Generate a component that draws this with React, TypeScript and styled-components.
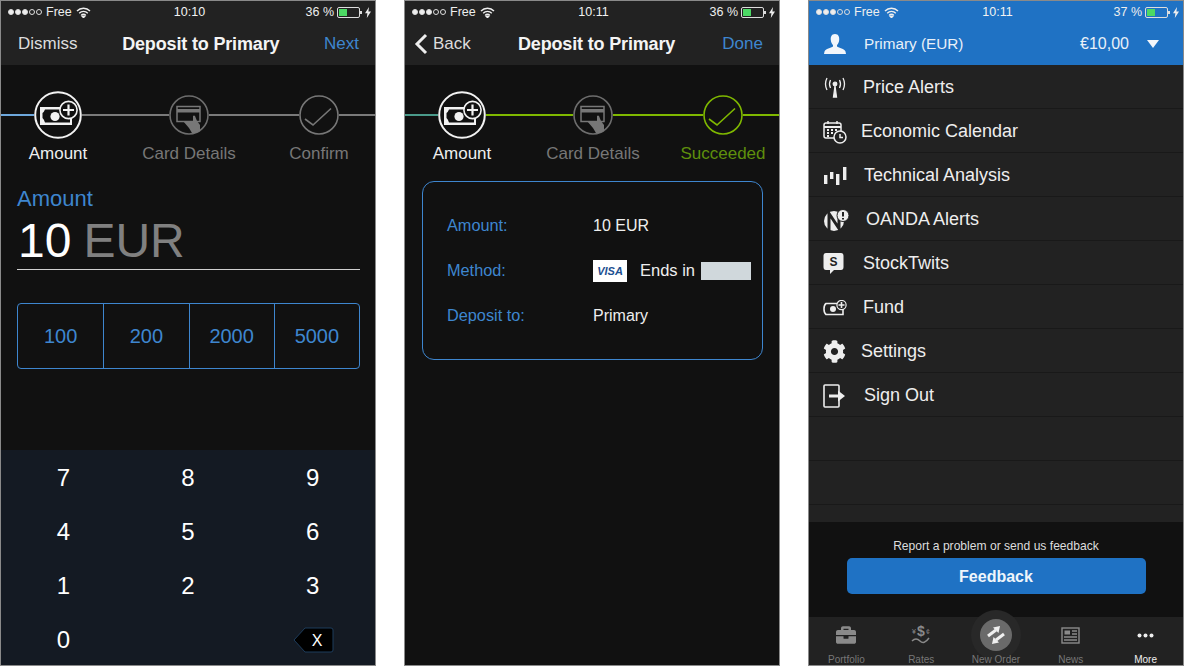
import React from 'react';
import styled, { createGlobalStyle } from 'styled-components';
import { FaCog, FaBriefcase } from 'react-icons/fa';

const GlobalStyle = createGlobalStyle`
  html, body {
    margin: 0;
    background: #fff;
  }
  * {
    box-sizing: border-box;
  }
`;

const BLUE = '#3e86cf';
const HEADER_BLUE = '#1f72c4';
const GREEN = '#7fb800';

const Page = styled.div`
  display: flex;
  gap: 28px;
  width: 1184px;
  height: 667px;
  overflow: hidden;
  font-family: 'Liberation Sans', Arial, sans-serif;
`;

const Phone = styled.div`
  display: flex;
  flex-direction: column;
  width: 376px;
  height: 666px;
  border: 1px solid #8a8a8a;
  background: #111;
  overflow: hidden;
`;

const Top = styled.div<{ $bg: string }>`
  height: 64px;
  flex: none;
  background: ${(p) => p.$bg};
`;

const StatusBar = styled.div`
  display: grid;
  grid-template-columns: 1fr auto 1fr;
  align-items: center;
  height: 22px;
  padding: 0 4px 0 7px;
  color: #eee;
  font-size: 12.5px;
`;

const StatusLeft = styled.div`
  display: flex;
  align-items: center;
  gap: 4px;
`;

const StatusRight = styled.div`
  display: flex;
  align-items: center;
  justify-content: flex-end;
  gap: 3px;
`;

const Dots = styled.div`
  display: flex;
  gap: 1px;
`;

const Dot = styled.span<{ $on: boolean }>`
  width: 6px;
  height: 6px;
  border-radius: 50%;
  border: 1px solid #ddd;
  background: ${(p) => (p.$on ? '#eee' : 'transparent')};
`;

const Clock = styled.div`
  font-weight: 500;
  color: #f2f2f2;
`;

const Battery = styled.div`
  position: relative;
  width: 23px;
  height: 11px;
  border: 1px solid #ddd;
  border-radius: 2px;
  padding: 1px;
  margin-right: 2px;
  &::after {
    content: '';
    position: absolute;
    right: -3px;
    top: 3px;
    width: 2px;
    height: 3px;
    background: #ddd;
  }
`;

const BatteryFill = styled.div<{ $level: number }>`
  width: ${(p) => p.$level}%;
  height: 100%;
  background: #4cd964;
`;

const NavBar = styled.div<{ $left: number }>`
  display: flex;
  align-items: center;
  justify-content: space-between;
  height: 42px;
  padding: 0 16px 0 ${(p) => p.$left}px;
  font-size: 17px;
`;

const NavLeft = styled.div`
  display: flex;
  align-items: center;
  gap: 5px;
  color: #ddd;
`;

const NavTitle = styled.div`
  color: #f4f4f4;
  font-size: 18px;
  font-weight: 700;
  letter-spacing: -0.16px;
`;

const NavRight = styled.div`
  color: ${BLUE};
`;

const Stepper = styled.div`
  display: flex;
  padding-top: 26px;
  height: 116px;
  flex: none;
`;

const Step = styled.div<{ $width: number }>`
  display: flex;
  flex-direction: column;
  align-items: center;
  width: ${(p) => p.$width}px;
`;

const StepHead = styled.div`
  display: flex;
  align-items: center;
  width: 100%;
  height: 48px;
`;

const Seg = styled.div<{ $color: string }>`
  flex: 1;
  height: 2px;
  background: ${(p) => p.$color};
`;

const StepIcon = styled.svg`
  flex: none;
  display: block;
`;

const StepLabel = styled.div<{ $color: string }>`
  margin-top: 4px;
  font-size: 17px;
  line-height: 22px;
  white-space: nowrap;
  color: ${(p) => p.$color};
`;

const AmountForm = styled.div`
  padding: 0 15px 0 16px;
  flex: 1;
`;

const AmountLabel = styled.div`
  margin-top: 5px;
  color: ${BLUE};
  font-size: 22px;
  line-height: 26px;
`;

const AmountField = styled.div`
  display: flex;
  align-items: baseline;
  gap: 12px;
  height: 57px;
  margin-top: 1px;
  padding-left: 1px;
  border-bottom: 1px solid #d0d0d0;
  font-size: 48px;
  line-height: 55px;
  color: #fff;
`;

const Currency = styled.span`
  color: #808080;
`;

const Presets = styled.div`
  display: grid;
  grid-template-columns: repeat(4, 1fr);
  height: 66px;
  margin-top: 33px;
  border: 1px solid ${BLUE};
  border-radius: 4px;
`;

const Preset = styled.div`
  display: flex;
  align-items: center;
  justify-content: center;
  color: ${BLUE};
  font-size: 20px;
  & + & {
    border-left: 1px solid ${BLUE};
  }
`;

const Keypad = styled.div`
  display: grid;
  grid-template-columns: repeat(3, 1fr);
  grid-auto-rows: 54px;
  flex: none;
  height: 215px;
  padding-top: 1px;
  background: #141a23;
`;

const Key = styled.div`
  display: flex;
  align-items: center;
  justify-content: center;
  color: #fff;
  font-size: 24px;
`;

const BackKey = styled.svg`
  display: block;
  margin-left: 2px;
`;

const Details = styled.div`
  display: flex;
  flex-direction: column;
  justify-content: center;
  gap: 19px;
  height: 179px;
  margin: 0 16px 0 17px;
  padding-left: 24px;
  border: 1px solid ${BLUE};
  border-radius: 12px;
  font-size: 16px;
`;

const DetailRow = styled.div`
  display: flex;
  align-items: center;
  height: 26px;
`;

const DetailKey = styled.div`
  width: 146px;
  color: ${BLUE};
  font-size: 16.3px;
`;

const DetailValue = styled.div`
  display: flex;
  align-items: center;
  color: #eee;
`;

const VisaBadge = styled.div`
  display: flex;
  align-items: center;
  justify-content: center;
  width: 34px;
  height: 22px;
  margin-right: 13px;
  background: #fff;
  color: #1d4f91;
  font-size: 11px;
  font-weight: 700;
  font-style: italic;
`;

const EndsIn = styled.span`
  font-size: 16.5px;
  margin-right: 6px;
`;

const Redacted = styled.div`
  width: 50px;
  height: 18px;
  background: #d0d8dc;
`;

const AccountBar = styled.div`
  display: flex;
  align-items: center;
  height: 42px;
  padding: 0 24px 1px 15px;
  color: #e8f0f8;
  font-size: 16px;
`;

const AccountName = styled.div`
  flex: 1;
  margin-left: 18px;
  font-size: 15.3px;
`;

const AccountValue = styled.div`
  margin-right: 18px;
`;

const Menu = styled.div`
  flex: 1;
  min-height: 0;
  overflow: hidden;
  background: #222;
`;

const MenuRow = styled.div`
  display: flex;
  align-items: center;
  height: 44px;
  padding: 2px 0 0 14px;
  border-bottom: 1px solid #191919;
  color: #eee;
  font-size: 18px;
`;

const MenuIcon = styled.div<{ $width: number }>`
  display: flex;
  align-items: center;
  width: ${(p) => p.$width}px;
  flex: none;
  color: #eee;
`;

const FeedbackPanel = styled.div`
  display: flex;
  flex-direction: column;
  align-items: center;
  flex: none;
  height: 95px;
  padding-top: 16px;
  background: #111;
`;

const FeedbackHint = styled.div`
  color: #ddd;
  font-size: 12.1px;
  line-height: 16px;
`;

const FeedbackButton = styled.div`
  display: flex;
  align-items: center;
  justify-content: center;
  width: 299px;
  height: 36px;
  margin-top: 4px;
  padding-top: 1px;
  border-radius: 5px;
  background: ${HEADER_BLUE};
  color: #eef5fb;
  font-size: 16px;
  font-weight: 700;
`;

const TabBar = styled.div`
  display: grid;
  grid-template-columns: repeat(5, 1fr);
  flex: none;
  height: 48px;
  background: #222;
`;

const Tab = styled.div<{ $active?: boolean }>`
  position: relative;
  display: flex;
  flex-direction: column;
  align-items: center;
  color: ${(p) => (p.$active ? '#eee' : '#777')};
  font-size: 10px;
`;

const TabIcon = styled.div`
  position: relative;
  display: flex;
  align-items: center;
  justify-content: center;
  height: 36px;
  margin-bottom: 1px;
  color: #8a8a8a;
`;

const TabText = styled.div`
  position: relative;
  line-height: 12px;
`;

const Bulge = styled.div`
  position: absolute;
  top: -7px;
  left: 50%;
  width: 50px;
  height: 50px;
  margin-left: -25px;
  border-radius: 50%;
  background: #282828;
`;

const StatusTop = ({ time, battery }: { time: string; battery: string }) => (
  <StatusBar>
    <StatusLeft>
      <Dots>
        {[true, true, true, false, false].map((on, i) => (
          <Dot key={i} $on={on} />
        ))}
      </Dots>
      Free
      <svg width="15" height="11" viewBox="0 0 15 11" fill="none" stroke="#eee" strokeWidth="1.4">
        <path d="M1 4 A9 9 0 0 1 14 4" />
        <path d="M3.2 6.2 A6 6 0 0 1 11.8 6.2" />
        <path d="M5.3 8.2 A3 3 0 0 1 9.7 8.2" />
        <path d="M6.2 9.2 L7.5 10.6 L8.8 9.2 Z" fill="#eee" />
      </svg>
    </StatusLeft>
    <Clock>{time}</Clock>
    <StatusRight>
      {battery}
      <Battery>
        <BatteryFill $level={42} />
      </Battery>
      <svg width="6" height="11" viewBox="0 0 6 11" fill="#eee">
        <path d="M4 0 L0 6.2 H2.4 L1.8 11 L6 4.6 H3.4 Z" />
      </svg>
    </StatusRight>
  </StatusBar>
);

const CashIcon = () => (
  <StepIcon width="48" height="48" viewBox="0 0 48 48">
    <circle cx="24" cy="24" r="22.8" fill="#111" stroke="#f2f2f2" strokeWidth="2" />
    <path d="M6 16 H38 V34 H6 Z" fill="#f2f2f2" />
    <path d="M11 18.5 H34 Q35 24 36 29 V31.5 H11 Q10 28 8.5 27 V22 Q10 21 11 18.5 Z" fill="#111" />
    <circle cx="21" cy="25.5" r="4.6" fill="#f2f2f2" />
    <circle cx="34.5" cy="19" r="8.6" fill="#111" stroke="#f2f2f2" strokeWidth="1.6" />
    <path d="M34.5 13.5 V24.5 M29 19 H40" stroke="#f2f2f2" strokeWidth="2.2" />
  </StepIcon>
);

const CardIcon = () => (
  <StepIcon width="40" height="40" viewBox="0 0 40 40">
    <circle cx="20" cy="20" r="19" fill="#111" stroke="#6d6d6d" strokeWidth="1.6" />
    <rect x="8" y="11.5" width="23" height="15" fill="none" stroke="#777" strokeWidth="1.5" />
    <rect x="8" y="14" width="23" height="3.5" fill="#777" />
    <path d="M14 26 H24 V21 Q25 20 26 21 L28 26 L31 30 L31 36 Q27 39 23 38 L20 33 Z" fill="#777" />
  </StepIcon>
);

const CheckIcon = ({ color }: { color: string }) => (
  <StepIcon width="40" height="40" viewBox="0 0 40 40">
    <circle cx="20" cy="20" r="19" fill="#111" stroke={color} strokeWidth="1.6" />
    <path d="M6 24 L14 30 L32 13.5" fill="none" stroke={color} strokeWidth="1.6" />
  </StepIcon>
);

const StepperView = ({ done }: { done: boolean }) => {
  const after = done ? GREEN : '#7a7a7a';
  const checkColor = done ? GREEN : '#777';
  return (
    <Stepper>
      <Step $width={114}>
        <StepHead>
          <Seg $color={done ? '#4a9a8a' : '#6ea8dc'} />
          <CashIcon />
          <Seg $color={after} />
        </StepHead>
        <StepLabel $color="#eee">Amount</StepLabel>
      </Step>
      <Step $width={148}>
        <StepHead>
          <Seg $color={after} />
          <CardIcon />
          <Seg $color={after} />
        </StepHead>
        <StepLabel $color="#777">Card Details</StepLabel>
      </Step>
      <Step $width={112}>
        <StepHead>
          <Seg $color={after} />
          <CheckIcon color={checkColor} />
          <Seg $color={after} />
        </StepHead>
        <StepLabel $color={done ? '#5f8f0c' : '#777'}>{done ? 'Succeeded' : 'Confirm'}</StepLabel>
      </Step>
    </Stepper>
  );
};

const AmountPhone = () => (
  <Phone>
    <Top $bg="#222">
      <StatusTop time="10:10" battery="36 %" />
      <NavBar $left={17}>
        <NavLeft>Dismiss</NavLeft>
        <NavTitle>Deposit to Primary</NavTitle>
        <NavRight>Next</NavRight>
      </NavBar>
    </Top>
    <StepperView done={false} />
    <AmountForm>
      <AmountLabel>Amount</AmountLabel>
      <AmountField>
        10 <Currency>EUR</Currency>
      </AmountField>
      <Presets>
        {['100', '200', '2000', '5000'].map((v) => (
          <Preset key={v}>{v}</Preset>
        ))}
      </Presets>
    </AmountForm>
    <Keypad>
      {['7', '8', '9', '4', '5', '6', '1', '2', '3', '0', ''].map((k, i) => (
        <Key key={i}>{k}</Key>
      ))}
      <Key>
        <BackKey width="41" height="26" viewBox="0 0 41 26">
          <path d="M12 1 H38 Q40 1 40 3 V23 Q40 25 38 25 H12 L1 13 Z" fill="#000" stroke="#1d3c5c" strokeWidth="1" />
          <text x="24" y="19" fill="#fff" fontSize="16" textAnchor="middle" fontFamily="Liberation Sans">X</text>
        </BackKey>
      </Key>
    </Keypad>
  </Phone>
);

const ReceiptPhone = () => (
  <Phone>
    <Top $bg="#222">
      <StatusTop time="10:11" battery="36 %" />
      <NavBar $left={9}>
        <NavLeft>
          <svg width="14" height="22" viewBox="0 0 14 22" fill="none" stroke="#eee" strokeWidth="3">
            <path d="M12 2 L3 11 L12 20" />
          </svg>
          Back
        </NavLeft>
        <NavTitle>Deposit to Primary</NavTitle>
        <NavRight>Done</NavRight>
      </NavBar>
    </Top>
    <StepperView done />
    <Details>
      <DetailRow>
        <DetailKey>Amount:</DetailKey>
        <DetailValue>10 EUR</DetailValue>
      </DetailRow>
      <DetailRow>
        <DetailKey>Method:</DetailKey>
        <DetailValue>
          <VisaBadge>VISA</VisaBadge>
          <EndsIn>Ends in</EndsIn>
          <Redacted />
        </DetailValue>
      </DetailRow>
      <DetailRow>
        <DetailKey>Deposit to:</DetailKey>
        <DetailValue>Primary</DetailValue>
      </DetailRow>
    </Details>
  </Phone>
);

const svgProps = { fill: 'none', stroke: '#eee' };

const menuItems: { label: string; width: number; icon: React.ReactNode }[] = [
  {
    label: 'Price Alerts',
    width: 40,
    icon: (
      <svg width="24" height="22" viewBox="0 0 24 22" {...svgProps} strokeWidth="1.3">
        <circle cx="12" cy="7" r="1.8" fill="#eee" />
        <path d="M12 9 L10.5 20 H13.5 Z" fill="#eee" />
        <path d="M7.5 3 Q5.5 7 7.5 11 M16.5 3 Q18.5 7 16.5 11 M4 1 Q1 7 4 13 M20 1 Q23 7 20 13" />
      </svg>
    ),
  },
  {
    label: 'Economic Calendar',
    width: 38,
    icon: (
      <svg width="24" height="24" viewBox="0 0 24 24" {...svgProps} strokeWidth="1.5">
        <rect x="1" y="3" width="17" height="15" rx="2" />
        <path d="M1 7 H18" strokeWidth="2" />
        <path d="M5 1 V4 M14 1 V4" />
        <path d="M4 10 H6 M8 10 H10 M12 10 H14 M4 13 H6 M8 13 H10 M4 16 H6" strokeWidth="2" />
        <circle cx="17" cy="17" r="6" fill="#222" />
        <path d="M17 14 V17.5 H20" />
      </svg>
    ),
  },
  {
    label: 'Technical Analysis',
    width: 41,
    icon: (
      <svg width="24" height="20" viewBox="0 0 24 20" fill="#eee">
        <rect x="1" y="9" width="3.4" height="9" />
        <rect x="7" y="6" width="3.4" height="7" />
        <rect x="13" y="8" width="3.4" height="11" />
        <rect x="20" y="1" width="3.4" height="13" />
      </svg>
    ),
  },
  {
    label: 'OANDA Alerts',
    width: 43,
    icon: (
      <svg width="27" height="22" viewBox="0 0 27 22">
        <circle cx="11" cy="12" r="10" fill="#eee" />
        <path d="M6 22 V4.5 L16 19.5 V2" fill="none" stroke="#222" strokeWidth="3" />
        <circle cx="20" cy="6.5" r="6" fill="#eee" stroke="#222" strokeWidth="1" />
        <path d="M20 3 V7.5 M20 9 V10.5" stroke="#222" strokeWidth="2" />
      </svg>
    ),
  },
  {
    label: 'StockTwits',
    width: 40,
    icon: (
      <svg width="21" height="21" viewBox="0 0 21 21">
        <path d="M3 0 H18 Q20.5 0 20.5 3 V14 Q20.5 17 18 17 H11 L7 21 V17 H3 Q.5 17 .5 14 V3 Q.5 0 3 0 Z" fill="#eee" />
        <text x="10.5" y="13" fill="#222" fontSize="12" fontWeight="700" textAnchor="middle" fontFamily="Liberation Sans">S</text>
      </svg>
    ),
  },
  {
    label: 'Fund',
    width: 40,
    icon: (
      <svg width="24" height="16" viewBox="0 0 24 16">
        <path d="M3 3.5 H20 V14.5 H3 Q1 13 1 9 Q1 5 3 3.5 Z" fill="none" stroke="#eee" strokeWidth="1.6" />
        <circle cx="10" cy="9" r="3" fill="#eee" />
        <circle cx="18.5" cy="5" r="4.6" fill="#222" stroke="#eee" strokeWidth="1.2" />
        <path d="M18.5 2 V8 M15.5 5 H21.5" stroke="#eee" strokeWidth="1.6" />
      </svg>
    ),
  },
  { label: 'Settings', width: 38, icon: <FaCog size={23} /> },
  {
    label: 'Sign Out',
    width: 41,
    icon: (
      <svg width="23" height="24" viewBox="0 0 23 24" {...svgProps} strokeWidth="1.6">
        <path d="M16 8 V2 Q16 1 15 1 H2 Q1 1 1 2 V22 Q1 23 2 23 H15 Q16 23 16 22 V16" />
        <path d="M6 10.5 H15 V6.5 L22 12 L15 17.5 V13.5 H6 Z" fill="#eee" stroke="none" />
      </svg>
    ),
  },
];

const tabs: { label: string; icon: React.ReactNode; active?: boolean }[] = [
  { label: 'Portfolio', icon: <FaBriefcase size={20} /> },
  {
    label: 'Rates',
    icon: (
      <svg width="20" height="22" viewBox="0 0 20 22" fill="none" stroke="#8a8a8a">
        <text x="10" y="12" fill="#8a8a8a" stroke="none" fontSize="14" fontWeight="700" textAnchor="middle" fontFamily="Liberation Sans">$</text>
        <text x="1" y="10" fill="#8a8a8a" stroke="none" fontSize="7" fontFamily="Liberation Sans">¥</text>
        <text x="15" y="10" fill="#8a8a8a" stroke="none" fontSize="7" fontFamily="Liberation Sans">¢</text>
        <path d="M1 17 Q5 13 9 17 T18 14" strokeWidth="1.5" />
      </svg>
    ),
  },
  {
    label: 'New Order',
    icon: (
      <svg width="32" height="32" viewBox="0 0 32 32">
        <circle cx="16" cy="16" r="16" fill="#6a6a6a" />
        <path d="M8 17 L16 11" stroke="#f0f0f0" strokeWidth="3" />
        <path d="M13 8.5 L20 7 L18.5 14 Z" fill="#f0f0f0" />
        <path d="M24 15 L16 21" stroke="#f0f0f0" strokeWidth="3" />
        <path d="M19 23.5 L12 25 L13.5 18 Z" fill="#f0f0f0" />
      </svg>
    ),
  },
  {
    label: 'News',
    icon: (
      <svg width="19" height="17" viewBox="0 0 19 17" fill="none" stroke="#8a8a8a" strokeWidth="1.4">
        <rect x="1" y="1" width="17" height="15" />
        <rect x="3.5" y="3.5" width="5.5" height="4" fill="#8a8a8a" stroke="none" />
        <path d="M11 4 H16 M11 7 H16 M3 10 H16 M3 13 H16" />
      </svg>
    ),
  },
  {
    label: 'More',
    active: true,
    icon: (
      <svg width="17" height="5" viewBox="0 0 17 5" fill="#eee">
        <circle cx="2.5" cy="2.5" r="2" />
        <circle cx="8.5" cy="2.5" r="2" />
        <circle cx="14.5" cy="2.5" r="2" />
      </svg>
    ),
  },
];

const MenuPhone = () => (
  <Phone>
    <Top $bg={HEADER_BLUE}>
      <StatusTop time="10:11" battery="37 %" />
      <AccountBar>
        <svg width="22" height="20" viewBox="0 0 22 20" fill="#f2f6fb">
          <path d="M11 0 C7.5 0 6.5 3 6.8 6 C7 8.5 8 10 9 11 V12.5 C7 14 1.5 14.5 .5 17.5 L0 20 H22 L21.5 17.5 C20.5 14.5 15 14 13 12.5 V11 C14 10 15 8.5 15.2 6 C15.5 3 14.5 0 11 0 Z" />
        </svg>
        <AccountName>Primary (EUR)</AccountName>
        <AccountValue>€10,00</AccountValue>
        <svg width="12" height="8" viewBox="0 0 12 8" fill="#f2f6fb">
          <path d="M0 0 H12 L6 8 Z" />
        </svg>
      </AccountBar>
    </Top>
    <Menu>
      {menuItems.map((item) => (
        <MenuRow key={item.label}>
          <MenuIcon $width={item.width}>{item.icon}</MenuIcon>
          {item.label}
        </MenuRow>
      ))}
      <MenuRow />
      <MenuRow />
      <MenuRow />
    </Menu>
    <FeedbackPanel>
      <FeedbackHint>Report a problem or send us feedback</FeedbackHint>
      <FeedbackButton>Feedback</FeedbackButton>
    </FeedbackPanel>
    <TabBar>
      {tabs.map((tab) => (
        <Tab key={tab.label} $active={tab.active}>
          {tab.label === 'New Order' && <Bulge />}
          <TabIcon>{tab.icon}</TabIcon>
          <TabText>{tab.label}</TabText>
        </Tab>
      ))}
    </TabBar>
  </Phone>
);

export default function App() {
  return (
    <>
      <GlobalStyle />
      <Page>
        <AmountPhone />
        <ReceiptPhone />
        <MenuPhone />
      </Page>
    </>
  );
}
